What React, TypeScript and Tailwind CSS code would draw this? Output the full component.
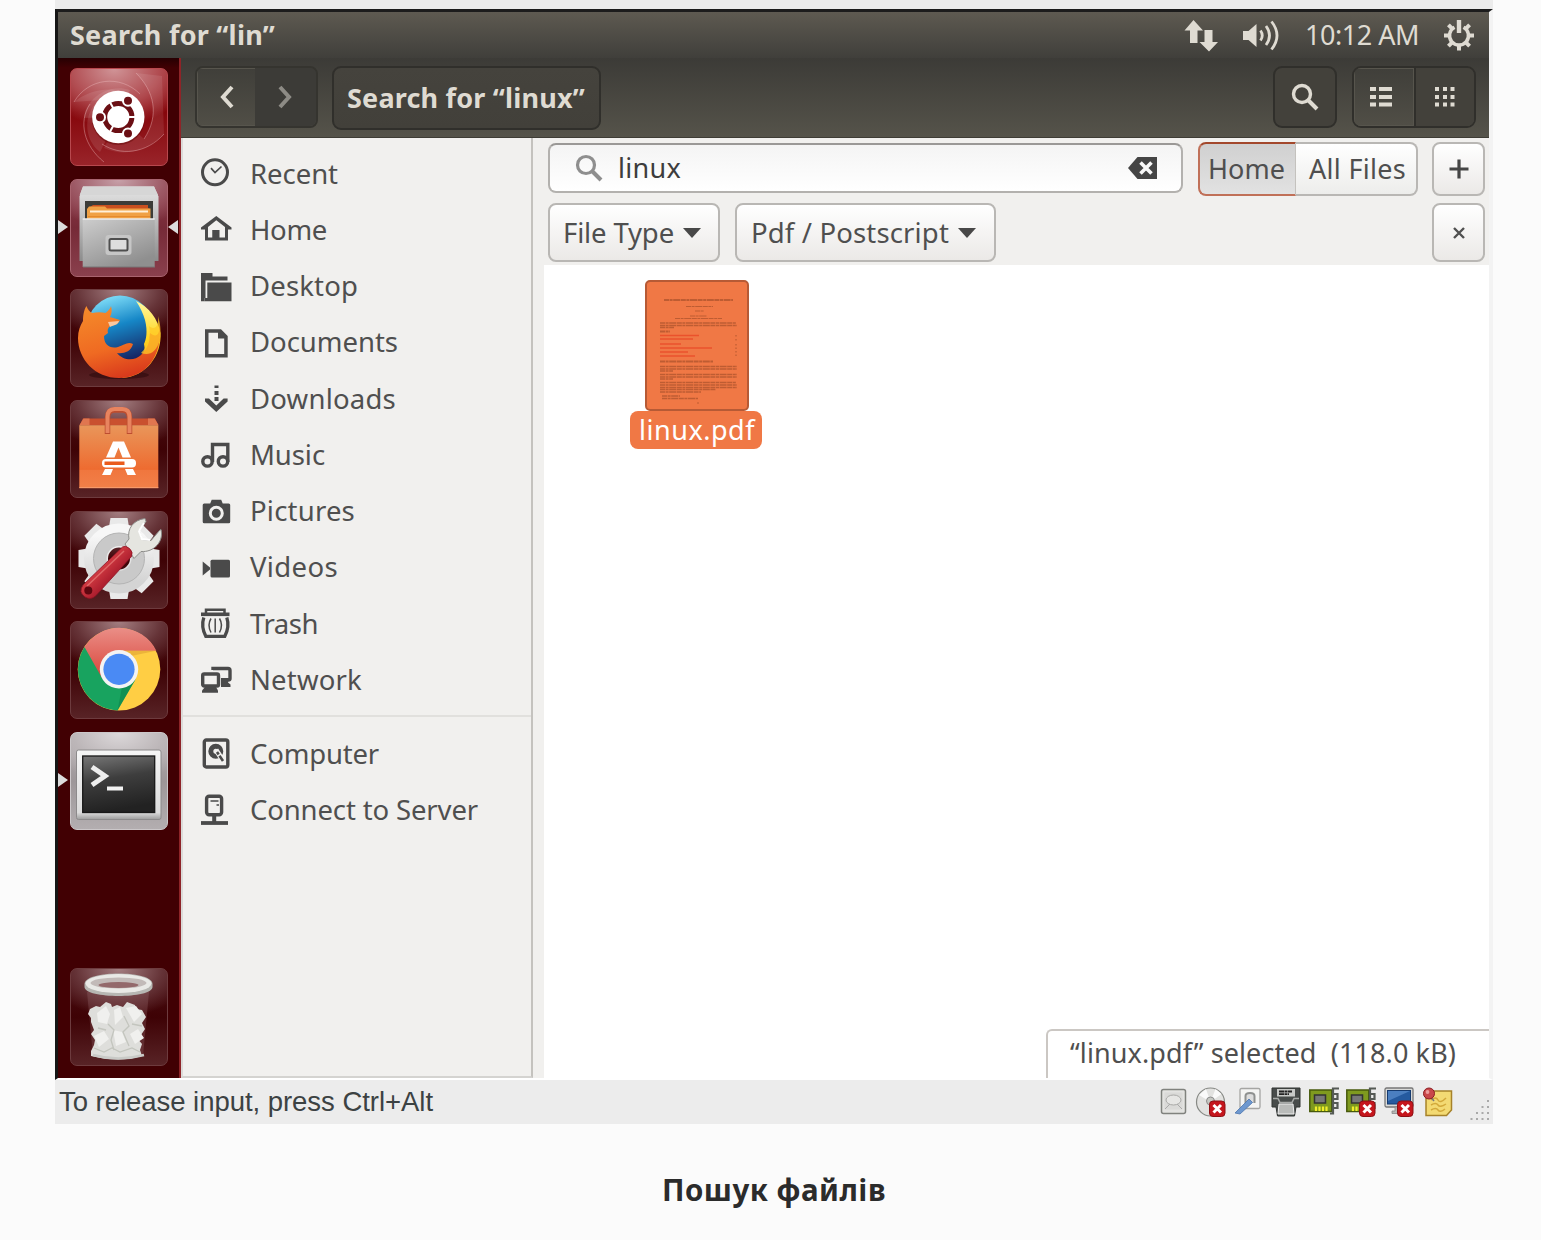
import { useLayoutEffect, useRef, type ReactNode } from 'react';

/* Text whose tracking is tuned so that it spans a given width. */
function Fit({ w, children, className = '' }: { w: number; children: string; className?: string }) {
  const ref = useRef<HTMLSpanElement>(null);
  useLayoutEffect(() => {
    const el = ref.current;
    if (!el) return;
    el.style.letterSpacing = '0px';
    const natural = el.getBoundingClientRect().width;
    el.style.letterSpacing = `${(w - natural) / children.length}px`;
  }, [w, children]);
  return (
    <span ref={ref} className={`inline-block shrink-0 whitespace-pre ${className}`}>
      {children}
    </span>
  );
}

function Tile({ tone = 'glass', left, right, children }: { tone?: string; left?: boolean; right?: boolean; children: ReactNode }) {
  const tones: Record<string, string> = {
    glass: 'bg-[radial-gradient(ellipse_75%_50%_at_50%_0%,#a37d80,#653337_60%,transparent_100%),linear-gradient(#4b1216,#3e0205_50%,#582326)] border-[#6d3b3e]',
    ubuntu: 'bg-[radial-gradient(ellipse_80%_60%_at_45%_0%,#d09497,#b04a4f_60%,transparent_100%),linear-gradient(#9c1c22,#86060b_45%,#99242a)] border-[#b8484e]',
    files: 'bg-[radial-gradient(ellipse_80%_50%_at_50%_0%,#c7a1a9,#9d5965_60%,transparent_100%),linear-gradient(#8f3c4a,#762a37_50%,#8a404d)] border-[#a9646f]',
    grey: 'bg-[radial-gradient(ellipse_80%_50%_at_50%_0%,#dcd8da,#bcb6b8_60%,transparent_100%),linear-gradient(#b5afb1,#9d9799_50%,#b3aeb0)] border-[#cbc7c9]',
  };
  return (
    <div className="relative flex h-[98px] shrink-0 justify-center">
      <div className={`h-[98px] w-[98px] rounded-[7px] border ${tones[tone]}`}>
        <svg viewBox="1 1 96 96" className="h-full w-full overflow-visible">{children}</svg>
      </div>
      {left && <div className="absolute left-0 top-[41px] h-0 w-0 border-y-[7px] border-l-[10px] border-y-transparent border-l-[#dcdcdc]" />}
      {right && <div className="absolute right-px top-[41px] h-0 w-0 border-y-[7px] border-r-[10px] border-y-transparent border-r-[#dcdcdc]" />}
    </div>
  );
}

const teeth = [0, 45, 90, 135, 180, 225, 270, 315];

function Launcher() {
  return (
    <aside className="flex w-[123px] shrink-0 flex-col gap-[12.7px] border-r-2 border-[#8e2428] bg-[#410003] bg-[linear-gradient(#260002,#410003_10px)] pt-[10px]">
      <Tile tone="ubuntu">
        <path d="M4 34C18 22 46 15 66 30L48 49 30 84C12 70 14 42 30 32Z" fill="#fff" fillOpacity=".1" />
        <path d="M66 5c18 18 24 42 8 66L50 49 34 80C56 90 78 82 94 66L92 8Z" fill="#fff" fillOpacity=".09" />
        <path d="M14 50C14 36 34 14 60 22L48 49Z" fill="#fff" fillOpacity=".1" />
        <path d="M4 34C18 10 50 6 70 26M66 5c18 18 24 42 8 66M94 66C76 86 50 88 32 76M34 94C14 78 8 54 20 36" fill="none" stroke="#f0c0c2" strokeOpacity=".4" strokeWidth="1" />
        <circle cx="48.3" cy="50.5" r="26.5" fill="#500" opacity=".4" />
        <circle cx="48.3" cy="49" r="26.2" fill="#fff" />
        <circle cx="48.3" cy="49" r="13.6" fill="none" stroke="#6b0f14" strokeWidth="5" />
        <g stroke="#fff" strokeWidth="2">
          <path d="M57 49h10M44 41.500l-5-9M44 56.500l-5 9" />
          <circle cx="30" cy="49.2" r="5" fill="#6b0f14" />
          <circle cx="58" cy="32.8" r="5" fill="#6b0f14" />
          <circle cx="58" cy="65.4" r="5" fill="#6b0f14" />
        </g>
      </Tile>
      <Tile tone="files" left right>
        <defs>
          <linearGradient id="cab" x1="0" y1="0" x2="0" y2="1"><stop offset="0" stopColor="#e6e6e6" /><stop offset="1" stopColor="#8c8c8c" /></linearGradient>
          <linearGradient id="drw" x1="0" y1="0" x2=".6" y2="1"><stop offset="0" stopColor="#cdcdcd" /><stop offset="1" stopColor="#8f8f8f" /></linearGradient>
        </defs>
        <path d="M13 7.500h71l4.500 10V82h-79V17.500Z" fill="url(#cab)" />
        <path d="M13 7.500h71l4 8.500H9.700Z" fill="#d6d6d6" />
        <path d="M15 22h68v18H15z" fill="#3c3c38" />
        <path d="M20 28l3-2h55v3l2 1v10H20z" fill="#c94f1e" />
        <path d="M17 30l2-2.500h16l2 2h43.500V40H17z" fill="#f0a145" />
        <path d="M20 32.500h58" stroke="#fff0d8" strokeWidth="1.800" />
        <path d="M18 37.500h62" stroke="#e58a2d" strokeWidth="1" />
        <path d="M12.700 40h72v48h-72z" fill="url(#drw)" />
        <path d="M12.700 40h72" stroke="#ededed" strokeWidth="1.500" />
        <path d="M13 88h72" stroke="#777" strokeWidth="1" />
        <rect x="35.500" y="56" width="26" height="20" rx="3" fill="#c6c6c6" />
        <rect x="39.500" y="60" width="18" height="11.500" rx="1.500" fill="#ddd" stroke="#4e4e4e" strokeWidth="2" />
      </Tile>
      <Tile>
        <defs>
          <linearGradient id="globe" x1=".3" y1="0" x2=".6" y2="1"><stop offset="0" stopColor="#83e0fa" /><stop offset=".45" stopColor="#1687c7" /><stop offset="1" stopColor="#16205e" /></linearGradient>
          <linearGradient id="fox" x1=".2" y1="0" x2=".5" y2="1"><stop offset="0" stopColor="#f58a2a" /><stop offset=".6" stopColor="#ef6a22" /><stop offset="1" stopColor="#d93a1c" /></linearGradient>
          <linearGradient id="tail" x1="0" y1="0" x2="0" y2="1"><stop offset="0" stopColor="#fff9a0" /><stop offset=".5" stopColor="#ffd51e" /><stop offset="1" stopColor="#f2901e" /></linearGradient>
        </defs>
        <ellipse cx="49" cy="86" rx="30" ry="4" fill="#1c0002" opacity=".4" />
        <circle cx="50" cy="40" r="33.500" fill="url(#globe)" />
        <path d="M66 12c13 6 22 18 24.500 32C92 66 76 88 52 89c8-13 26-16 22-34 2-4 4-12 1-24-2-7-5-13-9-19Z" fill="url(#tail)" />
        <path d="M13 32c0-8 2-13 3.500-15 1 3 3 6 6 7 4-1 9-1 13 0 3-2 5-5 5.500-7 1 4 1 7-1 11l10 3c-1 4-6 5-10 6-2 2-3 4-2 7l-4 3c0 9 6 13 14 11 6-2 10-6 15-3-2 8-10 10-16 9 6 8 18 8 24 2 7-7 9-14 9-22 6 5 10 2 9.500-8C93 68 75 89 49 89 25 89 8 70 8 49c0-7 2-12 5-17Z" fill="url(#fox)" />
        <path d="M71 64c8-8 10-17 8-27 7 6 10-2 9-10 7 22-1 43-17 37Z" fill="#ffc927" opacity=".75" />
        <path d="M38 33l11-1c-1 4-5 4-9 6Z" fill="#f9c8a0" />
      </Tile>
      <Tile>
        <defs>
          <linearGradient id="bag" x1="0" y1="0" x2="0" y2="1"><stop offset="0" stopColor="#e9965a" /><stop offset=".7" stopColor="#ee6b30" /><stop offset=".71" stopColor="#f0763e" /><stop offset="1" stopColor="#f28049" /></linearGradient>
        </defs>
        <path d="M13 18.500h72l3.500 7h-79Z" fill="#c9502f" />
        <path d="M9.500 25l4-6.500h6V25zM78 25v-6.500h6.500l4 6.500z" fill="#e07650" />
        <path d="M9.300 25.300h79v63h-79z" fill="url(#bag)" />
        <path d="M9.300 87.500h79" stroke="#f79a6b" />
        <path d="M37.500 34V18q0-8 7-8h8q7 0 7 8v16" fill="none" stroke="#bd4d2f" strokeWidth="5.500" />
        <path d="M37.500 33V17q0-8 7-8h8q7 0 7 8v16" fill="none" stroke="#e8845f" strokeWidth="4" />
        <path d="M43 41.500h11l7 16H52.500l-4-10-4 10H36ZM35 69h8l-2.500 6H32zM55 69h8l3 6h-8.500z" fill="#fff" />
        <rect x="32" y="59" width="34" height="8.500" rx="4" fill="#fff" />
        <rect x="34.500" y="61.500" width="20" height="3.500" fill="#ea5b1c" />
      </Tile>
      <Tile>
        <defs>
          <linearGradient id="gear" x1="0" y1="0" x2="0" y2="1"><stop offset="0" stopColor="#f7f7f7" /><stop offset="1" stopColor="#d4d4d4" /></linearGradient>
          <linearGradient id="hand" x1="0" y1="0" x2="1" y2="1"><stop offset=".3" stopColor="#e2474a" /><stop offset=".7" stopColor="#9c1226" /></linearGradient>
        </defs>
        <g fill="#e9e9e9">
          {teeth.map((a) => (
            <path key={a} d="M39 16l1.500-9h17l1.500 9z" transform={`rotate(${a} 49 47.500)`} />
          ))}
        </g>
        <circle cx="49" cy="47.500" r="23" fill="none" stroke="url(#gear)" strokeWidth="24" />
        <circle cx="49" cy="47.500" r="19" fill="none" stroke="#c9c9c9" strokeWidth="13" />
        <circle cx="49" cy="47.500" r="25.500" fill="none" stroke="#b4b4b4" strokeWidth="1" />
        <path d="M55 33l4-5C57 18 63 9 75 7.500l1 3-7 9 3 9 9 1 8.500-10 1.500-1c3 12-7 23-20 22l-7 7Z" fill="#e5e5e0" stroke="#8d8d8a" strokeWidth="1" />
        <path d="M74 12l-5 8 3 8 8 1" fill="none" stroke="#fff" strokeWidth="2" />
        <path d="M52.500 36q3-2 7 1.500t2 8L26 84.500q-5 5-11 1.500-7-5-2-12Z" fill="url(#hand)" stroke="#8e1325" strokeWidth=".8" />
        <path d="M54 40L17 75" stroke="#f08a84" strokeWidth="1.500" opacity=".6" />
        <circle cx="18.300" cy="79.500" r="4" fill="#5e0710" />
      </Tile>
      <Tile>
        <defs>
          <linearGradient id="cred" x1="0" y1="0" x2="0" y2="1"><stop offset="0" stopColor="#ea8e87" /><stop offset="1" stopColor="#d9453a" /></linearGradient>
        </defs>
        <circle cx="49" cy="48.300" r="41.300" fill="#ffce44" />
        <path d="M14.500 26A41.300 41.300 0 0 0 47.500 89.500L65.500 58.500 49 48Z" fill="#18a35f" />
        <path d="M14.500 26A41.300 41.300 0 0 1 86.300 29.700H49L32 57Z" fill="url(#cred)" />
        <path d="M61 35L86.300 29.700H49Z" fill="#d99a2f" opacity=".5" />
        <path d="M65.500 58.500L57 73 47.500 89.500 52 66Z" fill="#0c7a42" opacity=".45" />
        <circle cx="49" cy="48.300" r="19.200" fill="#f3f3f3" />
        <circle cx="49" cy="48.300" r="15.600" fill="#4a8af4" />
      </Tile>
      <Tile tone="grey" left>
        <defs>
          <linearGradient id="bez" x1="0" y1="0" x2="0" y2="1"><stop offset="0" stopColor="#f6f6f6" /><stop offset=".9" stopColor="#dcdcdc" /><stop offset="1" stopColor="#9c9c9c" /></linearGradient>
          <linearGradient id="scr" x1="0" y1="0" x2=".2" y2="1"><stop offset="0" stopColor="#777" /><stop offset=".45" stopColor="#3e3e3e" /><stop offset="1" stopColor="#222" /></linearGradient>
        </defs>
        <rect x="6.500" y="18" width="84.500" height="69.500" rx="2" fill="url(#bez)" stroke="#8c8a8b" strokeWidth="1" />
        <rect x="12.700" y="24" width="72" height="56.500" fill="url(#scr)" stroke="#181818" strokeWidth="1.300" />
        <path d="M22 35l13 9-13 9" fill="none" stroke="#eee" strokeWidth="5" />
        <path d="M37 56.500h16" stroke="#f2f2f2" strokeWidth="4" />
      </Tile>
      <div className="mt-auto pb-[12px]">
        <Tile>
          <path d="M17 24l6 64q25 5 50 0l6-64Z" fill="#b08a8c" fillOpacity=".22" />
          <path d="M20 41l6-3 4 1 6-5 5 2 1 3 5-2 6 2 4-5 8 3 1 4 6 1 4 7-4 6 3 6-4 6-4 3 5 6-2 6 2 6q-23 7-51 0l0-5 3-6 1-5-4-6 3-4-3-8 0-4-3-4Z" fill="#dededb" />
          <path d="M27 45l9-7 4 8-3 10-9-2zM44 42l6-3 3 10-8 8zM56 40l10-2 6 8-8 8zM24 68l10-5 5 8-10 8zM43 62l9 2 4 10-10 4zM60 66l8-5 6 9-9 6z" fill="#f0f0ee" />
          <path d="M38 56l6 6-3 10 3 10M54 48l5 10-6 6 6 14M28 60l8 2M62 56l10 2M24 80l10 4 8-4 8 4 12-4 8 4" fill="none" stroke="#c3c5be" strokeWidth="1.300" />
          <path d="M23 87q25 7 51 0" fill="none" stroke="#c9cac7" strokeWidth="2.500" />
          <path d="M14.500 16c0-14 68-14 68 0v3c0 12-68 12-68 0Z" fill="#b7b7b3" />
          <ellipse cx="48.500" cy="15.500" rx="33" ry="9.500" fill="#e9e9e6" />
          <ellipse cx="48.500" cy="15" rx="28" ry="5.500" fill="#c2bab8" />
          <ellipse cx="48.500" cy="17" rx="20" ry="3" fill="#93696b" />
        </Tile>
      </div>
    </aside>
  );
}

const D = '#4a4a4a';
const places: { name: string; w: number; icon: ReactNode }[] = [
  { name: 'Recent', w: 88, icon: (<g fill="none" stroke={D}><circle cx="15" cy="15.300" r="12.500" strokeWidth="3" /><path d="M11 11.200l4 4.300 6.500-6" strokeWidth="1.700" /></g>) },
  { name: 'Home', w: 77, icon: (<g fill={D}><path d="M1 14.500L16.300 3 31.500 14.500v2H28V27.500H5V16.500H1ZM8 14v10.500h4.500V17h7v7.500H25V14L16.300 7.200Z" fillRule="evenodd" /><path d="M12.500 17h6v9h-6z" /></g>) },
  { name: 'Desktop', w: 108, icon: (<g fill={D}><path d="M1 3h11.500v3.500h15V10.500H5.500V28h-1v3.300H1Z" /><path d="M7.300 12.500h24.200v18.800H4.500V28h2.800Z" /></g>) },
  { name: 'Documents', w: 148, icon: (<path d="M5 3.300h16L27.700 10v21.500H5ZM8.500 6.800V28h15.700V12.500H18V6.800Z" fill={D} fillRule="evenodd" />) },
  { name: 'Downloads', w: 146, icon: (<g fill={D}><path d="M14.500 3.500h4V6h-4zM14.500 9h4v4h-4zM14.500 15h4v4h-4z" /><path d="M5 16.500h4l7.300 7 7.300-7h4v3L16.300 30 5 19.500Z" /></g>) },
  { name: 'Music', w: 75, icon: (<g fill="none" stroke={D} strokeWidth="3.400"><circle cx="7.500" cy="23.400" r="4.700" /><circle cx="23" cy="23.400" r="4.700" /><path d="M12.500 24V6.500H27.800V24" /></g>) },
  { name: 'Pictures', w: 105, icon: (<g><path d="M2.700 10q0-1.500 1.500-1.500h6l1.500-3.700h9.500l1.500 3.700h6q1.500 0 1.500 1.500v16.700q0 1.500-1.500 1.500h-24.500q-1.500 0-1.500-1.500Z" fill={D} /><circle cx="16.300" cy="18.200" r="6" fill="none" stroke="#f1f0ee" strokeWidth="3" /></g>) },
  { name: 'Videos', w: 88, icon: (<g fill={D}><rect x="10.500" y="8.700" width="19.500" height="17.800" rx="1.500" /><path d="M2.700 10.500L10 16.500v2l-7.300 6Z" /></g>) },
  { name: 'Trash', w: 68, icon: (<g fill="none" stroke={D}><path d="M1 7.300h28.500" strokeWidth="3.600" /><path d="M6 6V2.800h18.500V6" strokeWidth="2.500" /><path d="M3.800 10.500q-3 9 2 18.800h19q5-9.800 2-18.800" strokeWidth="3.300" /><path d="M11 11.500q-4 6.500 0 14M15.200 11.500v14M19.500 11.500q4 6.500 0 14" strokeWidth="1.500" /></g>) },
  { name: 'Network', w: 112, icon: (<g fill="none" stroke={D}><rect x="2.700" y="11" width="15.800" height="12" rx="1.500" strokeWidth="3.400" /><path d="M5 24h11l2 3.500v2.200H2V27.500Z" fill={D} stroke="none" /><path d="M13 7V5.500h15q2 0 2 2v8q0 1.500-2 1.500h-7" strokeWidth="3.400" /><path d="M21 15h8l-1 4.500 2.500 2V24H21Z" fill={D} stroke="none" /></g>) },
];
const devices: typeof places = [
  { name: 'Computer', w: 129, icon: (<g fill="none" stroke={D}><rect x="4.300" y="2" width="23.500" height="27" rx="2" strokeWidth="3.400" /><circle cx="15.800" cy="13.300" r="5" strokeWidth="5" /><path d="M16 12l8 12" stroke="#f1f0ee" strokeWidth="5" /><path d="M17 14l6 9" strokeWidth="2.600" strokeDasharray="3 1.500 8" /></g>) },
  { name: 'Connect to Server', w: 228, icon: (<g fill="none" stroke={D}><rect x="6.600" y="2.300" width="15" height="18.500" rx="2.500" strokeWidth="3.400" /><path d="M10.500 7h8M16.500 11h2.500" strokeWidth="1.500" /><path d="M14.200 21v7" strokeWidth="4" /><path d="M1 29h27" strokeWidth="3.800" /></g>) },
];

function Row({ p }: { p: (typeof places)[number] }) {
  return (
    <li className="flex h-[56.250px] items-center pl-[17px]">
      <svg viewBox="0 0 32 32" className="mr-[18px] h-8 w-8 overflow-visible">{p.icon}</svg>
      <Fit w={p.w} className="text-[27.500px] text-[#4f4f4f]">{p.name}</Fit>
    </li>
  );
}

const btn = 'flex items-center rounded-[8px] border-2 border-[#b9b7b4] bg-gradient-to-b from-white to-[#ebe9e7] text-[27.500px] text-[#4f4f4f]';

const RedX = () => (
  <g><rect x="13.500" y="14" width="15.500" height="15.500" rx="3.500" fill="#c5161d" stroke="#8d1015" /><path d="M17.500 18l7.500 7.500M25 18l-7.500 7.500" stroke="#fff" strokeWidth="3" /></g>
);
const Card = () => (
  <g><path d="M.800 3h22v21.500h-22z" fill="#7f9a1f" stroke="#47590c" strokeWidth="1.500" /><rect x="5.500" y="8" width="11" height="8" fill="#777" stroke="#333" strokeWidth="1.500" /><path d="M7 19.500v4.500M10.500 19.500v4.500M14 19.500v4.500M17.500 19.500v4.500" stroke="#f1ee2b" strokeWidth="2.200" /><path d="M30 1.500h-6v25H21M25 7h3.500v5H25M25 16h3.500v5H25" fill="none" stroke="#555a55" strokeWidth="2.200" /></g>
);
const Status = ({ children }: { children: ReactNode }) => <svg viewBox="0 0 30 30" className="h-[30px] w-[30px] overflow-visible">{children}</svg>;

export default function App() {
  return (
    <div className="h-[1240px] w-[1541px] overflow-hidden bg-[#fbfbfb] pl-[55px] font-['Noto_Sans',sans-serif]">
      <div className="flex h-[1124px] w-[1438px] flex-col bg-[#ececec] pt-[9px]">
        <div className="flex h-[1071px] flex-col border-b-2 border-l-[3px] border-r-[4px] border-t-[3px] border-b-white border-l-[#161616] border-r-[#f3f3f3] border-t-[#1c1c1c]">
          <header className="flex h-[46px] shrink-0 items-center bg-gradient-to-b from-[#5e5a51] to-[#403f3b] pl-[12px] text-[27px] text-[#dfdbd2]">
            <Fit w={205} className="font-bold">Search for “lin”</Fit>
            <svg viewBox="0 0 34 34" className="ml-auto mr-[25px] h-[34px] w-[34px]" fill="#dfdbd2"><path d="M9.500 2L19 12.500H13.500V25H6V12.500H.500ZM20.500 12h8v12h5.500L25 33.500 15.500 24h5Z" /></svg>
            <svg viewBox="0 0 38 34" className="mr-[24px] h-[34px] w-[38px]" fill="none" stroke="#dfdbd2" strokeWidth="2.800"><path d="M0 13h5.500L13.500 6v23L5.500 22H0z" fill="#dfdbd2" stroke="none" /><path d="M17.500 12.500q3.500 5 0 10M23 8q7 9.500 0 19M28.500 3.500q11 14 0 28" /></svg>
            <Fit w={114} className="mr-[25px]">10:12 AM</Fit>
            <svg viewBox="0 0 30 30" className="mr-[15px] h-[30px] w-[30px] overflow-visible" fill="none" stroke="#dfdbd2"><path d="M10.500 7.200a9.500 9.500 0 1 0 9 0" strokeWidth="3.500" /><path d="M15 0v13" strokeWidth="4.400" /><g strokeWidth="4">{[45, 90, 135, 180, 225, 270, 315].map((a) => (<path key={a} d="M15 .500v5" transform={`rotate(${a} 15 15.500)`} />))}</g></svg>
          </header>
          <div className="flex min-h-0 flex-1">
            <Launcher />
            <div className="flex min-w-0 flex-1 flex-col">
              <div className="flex h-[80px] shrink-0 items-start border-b border-[#3e3c35] bg-gradient-to-b from-[#3c3b37] to-[#55534a] pl-[14px] pr-[13px] pt-[8px]">
                <div className="flex h-[62px] w-[123px] overflow-hidden rounded-[8px] border-2 border-[#35342f]">
                  <div className="flex w-[58px] items-center justify-center border border-r-0 border-[#57554d] bg-gradient-to-b from-[#403f3a] to-[#504e46]">
                    <svg viewBox="0 0 14 24" className="h-6 w-3.5"><path d="M12 2L3 12l9 10" fill="none" stroke="#dfdbd2" strokeWidth="4" /></svg>
                  </div>
                  <div className="flex flex-1 items-center justify-center bg-[#3c3b37]">
                    <svg viewBox="0 0 14 24" className="mr-px h-6 w-3.5"><path d="M2 2l9 10-9 10" fill="none" stroke="#8d8b85" strokeWidth="4" /></svg>
                  </div>
                </div>
                <div className="ml-[14px] flex h-[64px] w-[269px] items-center rounded-[9px] border-2 border-[#302f2b] bg-gradient-to-b from-[#45433d] to-[#42403a] pl-[13px] text-[27px] font-bold text-[#dfdbd2]">
                  <Fit w={238}>Search for “linux”</Fit>
                </div>
                <div className="ml-auto mr-[15px] flex h-[62px] w-[64px] items-center justify-center rounded-[9px] border-2 border-[#302f2b] bg-[#43413b]">
                  <svg viewBox="0 0 28 28" className="h-7 w-7" fill="none" stroke="#dfdbd2"><circle cx="11" cy="11" r="8.500" strokeWidth="3.400" /><path d="M17 17l9 9" strokeWidth="4" /></svg>
                </div>
                <div className="flex h-[62px] w-[124px] overflow-hidden rounded-[9px] border-2 border-[#302f2b]">
                  <div className="flex flex-1 items-center justify-center border border-[#57554d] bg-gradient-to-b from-[#403f3a] to-[#504e46]">
                    <svg viewBox="0 0 22 20" className="mr-1.5 h-5 w-[22px]" fill="#dfdbd2"><path d="M0 0h6v4H0zM9 0h13v4H9zM0 8h6v4H0zM9 8h13v4H9zM0 15.500h6v4H0zM9 15.500h13v4H9z" /></svg>
                  </div>
                  <div className="flex flex-1 items-center justify-center border-l-2 border-[#302f2b] bg-[#43413b]">
                    <svg viewBox="0 0 20 20" className="h-5 w-5" fill="#dfdbd2"><path d="M0 0h4v4H0zM8 0h4v4H8zM15.500 0h4v4h-4zM0 8h4v4H0zM8 8h4v4H8zM15.500 8h4v4h-4zM0 15.500h4v4H0zM8 15.500h4v4H8zM15.500 15.500h4v4h-4z" /></svg>
                  </div>
                </div>
              </div>
              <div className="flex min-h-0 flex-1">
                <nav className="w-[352px] shrink-0 border-b-2 border-l-2 border-r-2 border-b-[#d4d3d0] border-l-[#dcdbd9] border-r-[#c4c2be] bg-[#f1f0ee] pt-[7px]">
                  <ul>{places.map((p) => (<Row key={p.name} p={p} />))}</ul>
                  <hr className="mb-[9px] mt-[7px] border-t-2 border-[#e1e0dd]" />
                  <ul>{devices.map((p) => (<Row key={p.name} p={p} />))}</ul>
                </nav>
                <main className="flex min-w-0 flex-1 flex-col bg-[#f1f0ee]">
                  <div className="flex h-[62px] shrink-0 items-start pl-[15px] pr-[4px] pt-[4px]">
                    <div className="mt-px flex h-[50px] w-[635px] items-center rounded-[8px] border-2 border-[#b3b1ae] border-t-[#9a9896] bg-gradient-to-b from-[#f4f4f4] to-white pl-[25px] pr-[23px]">
                      <svg viewBox="0 0 28 28" className="mr-[15px] h-7 w-7" fill="none" stroke="#8e8e8e"><circle cx="11" cy="11" r="8.500" strokeWidth="3.200" /><path d="M17 17l9 9" strokeWidth="4" /></svg>
                      <Fit w={63} className="text-[27px] text-[#3d3d3d]">linux</Fit>
                      <svg viewBox="0 0 30 22" className="ml-auto h-[22px] w-[30px]"><path d="M0 11L9.500 0H29v22H9.500Z" fill="#454545" /><path d="M12.500 5.500l11 11M23.500 5.500l-11 11" stroke="#f8f8f8" strokeWidth="3.600" /></svg>
                    </div>
                    <div className="ml-[15px] flex h-[54px] w-[220px] text-[27px] text-[#4f4f4f]">
                      <div className="flex w-[98px] items-center rounded-l-[8px] border-2 border-r border-[#c07058] border-r-[#c4c2be] border-t-[#a3482c] bg-gradient-to-b from-[#d0d0d0] to-[#e2e2e2] pl-[8px]"><Fit w={77}>Home</Fit></div>
                      <div className="flex flex-1 items-center rounded-r-[8px] border-2 border-l-0 border-[#b9b7b4] bg-gradient-to-b from-white to-[#ededeb] pl-[13px]"><Fit w={97}>All Files</Fit></div>
                    </div>
                    <div className={`${btn} ml-auto h-[54px] w-[53px] justify-center`}><svg viewBox="0 0 20 20" className="h-5 w-5"><path d="M10 .500v19M.500 10h19" stroke="#454545" strokeWidth="3.200" /></svg></div>
                  </div>
                  <div className="flex h-[65px] shrink-0 items-start pl-[15px] pr-[4px] pt-[3px]">
                    <div className={`${btn} h-[59px] w-[172px] pl-[13px]`}><Fit w={111}>File Type</Fit><svg viewBox="0 0 18 10" className="ml-[9px] h-2.5 w-[18px]"><path d="M0 0h18L9 10z" fill="#484848" /></svg></div>
                    <div className={`${btn} ml-[15px] h-[59px] w-[261px] pl-[14px]`}><Fit w={198}>Pdf / Postscript</Fit><svg viewBox="0 0 18 10" className="ml-[9px] h-2.5 w-[18px]"><path d="M0 0h18L9 10z" fill="#484848" /></svg></div>
                    <div className={`${btn} ml-auto h-[59px] w-[53px] justify-center`}><svg viewBox="0 0 12 12" className="h-3 w-3"><path d="M1 1l10 10M11 1L1 11" stroke="#505050" strokeWidth="2.400" /></svg></div>
                  </div>
                  <div className="ml-[11px] flex flex-1 flex-col justify-between bg-white">
                    <div className="ml-[86px] mt-[15px] flex w-[132px] flex-col items-center">
                      <div className="ml-[2px] h-[131px] w-[104px] rounded-[5px] border-2 border-[#b65a35] bg-[#f07845]">
                        <svg viewBox="2 2 100 127" className="h-full w-full" fill="none" stroke="#8c3f20">
                          <g strokeOpacity=".5" strokeDasharray="5 .6 3 .6 7 .6">
                            <path d="M19 20h69" strokeWidth="2.200" /><path d="M41 26.500h27M50 31h9M45 36h17M30 38.500h47" strokeWidth="1.200" />
                            <path d="M15 43h76M15 45.500h77M15 47.500h14" strokeWidth="1.300" /><path d="M15 51.500h10" strokeWidth="2" /><path d="M15 81.500h53" strokeWidth="2" />
                            <path d="M15 86.500h77M15 89h77M15 91h13M15 94.500h77M15 97h77M15 99h13M15 102.500h76M15 105h77M15 107.500h77M15 109.500h56M15 112h41M17 116h18M17 118.500h36" strokeWidth="1.600" />
                          </g>
                          <g stroke="#e8391c" strokeOpacity=".6" strokeWidth="1.300"><path d="M15 55.500h39M15 59h33M15 64h21M15 68h52M15 72h28M15 76h35" /></g>
                          <path d="M91 55v3M91 59v3M91 64v6M91 71v6" strokeOpacity=".6" strokeDasharray="1.500 2" />
                          <path d="M52 123h2" strokeOpacity=".5" />
                        </svg>
                      </div>
                      <div className="flex h-[38px] w-[132px] items-center justify-center rounded-[8px] bg-[#f07845] pl-[2px] text-[27px] text-white"><Fit w={116}>linux.pdf</Fit></div>
                    </div>
                    <div className="flex h-[49px] w-[443px] items-center self-end rounded-tl-[6px] border-l-2 border-t-2 border-[#cbc7c3] pb-[3px] pl-[22px] text-[27px] text-[#4f4f4f]"><Fit w={386}>“linux.pdf” selected  (118.0 kB)</Fit></div>
                  </div>
                </main>
              </div>
            </div>
          </div>
        </div>
        <footer className="flex flex-1 items-center pl-[4px] font-['Liberation_Sans',sans-serif] text-[27.500px] text-[#3c4243]">
          <Fit w={374}>To release input, press Ctrl+Alt</Fit>
          <div className="ml-auto mr-[19px] flex gap-[7.500px]">
            <Status><rect x="2.500" y="2.500" width="24" height="24" rx="2" fill="#e3e3e1" stroke="#80827e" strokeWidth="1.500" /><rect x="5.500" y="5.500" width="18" height="17" fill="#dadad8" /><ellipse cx="14.500" cy="13" rx="7.500" ry="5" fill="#e6e6e4" stroke="#a9a9a7" /><path d="M6 22l5-5M23 22l-5-5" stroke="#aaa" /></Status>
            <Status><circle cx="14.500" cy="15" r="14" fill="#e2e2e0" stroke="#878985" strokeWidth="1.200" /><path d="M14.500 15L3 8l7-6zM14.500 15l11-8-6-5z" fill="#fafafa" /><circle cx="14.500" cy="14" r="4" fill="#c6c8c3" stroke="#8b8b8b" /><RedX /></Status>
            <Status><rect x="6" y="1.500" width="20" height="20" rx="1.500" fill="#f4f4f3" stroke="#a5a5a3" strokeWidth="1.300" /><path d="M11.500 16V9q0-3 4.500-3t4.500 3v7" fill="#ddd" stroke="#8f9190" strokeWidth="2" /><path d="M1 26L15 12l3.500 3.500L6 27z" fill="#6e98cf" stroke="#4a74ad" strokeWidth=".8" /></Status>
            <Status><path d="M1 1h28v19h-4l-1.500 9h-17L5 20H1z" fill="#484c4b" stroke="#303433" /><rect x="6" y="2" width="18" height="7.500" fill="#c8cac8" /><path d="M8 4.500h13M8 7.200h10" stroke="#222" strokeWidth="1.800" strokeDasharray="5 .5 3 .5" /><path d="M2 11.500h5l2 4h12l2-4h5" fill="none" stroke="#a8aba9" strokeWidth="1.500" /><path d="M8 17h14l1 10H7z" fill="#b9bbb9" stroke="#eee" /></Status>
            <Status><Card /></Status>
            <Status><Card /><RedX /></Status>
            <Status><rect x="1" y="1" width="28" height="19" rx="1.500" fill="#d9dad8" stroke="#777" strokeWidth="1.300" /><rect x="3.500" y="3.500" width="23" height="13.500" fill="#255a9f" stroke="#153b70" /><path d="M4 4h22L4 14z" fill="#4b7fc0" /><path d="M11 20h7v4h4v2.500H8V24h3z" fill="#b5b7b5" stroke="#888" strokeWidth=".8" /><RedX /></Status>
            <Status><path d="M5 4h25.500v19l-5 5.500H5z" fill="#f3da73" stroke="#a6822a" strokeWidth="1.500" /><path d="M10 13q5-4 7 0t8-2M10 18q5-3 7 0t8-1M10 23q5-3 7 0t7-1" fill="none" stroke="#d3a93a" strokeWidth="1.500" /><path d="M8 8l5 6" stroke="#777" strokeWidth="1.500" /><circle cx="8" cy="6.500" r="5.500" fill="#c9474a" stroke="#8c1d22" /><circle cx="6.500" cy="5" r="1.900" fill="#eb9c9c" /></Status>
          </div>
          <svg viewBox="0 0 20 22" className="mr-[3px] mt-[18px] h-[22px] w-5" fill="#a9a9a9"><path d="M17 0h2v2h-2zM17 6h2v2h-2zM11.500 6h2v2h-2zM17 12h2v2h-2zM11.500 12h2v2h-2zM6 12h2v2H6zM17 18h2v2h-2zM11.500 18h2v2h-2zM6 18h2v2H6zM.500 18h2v2h-2z" /></svg>
        </footer>
      </div>
      <div className="flex h-[116px] w-[1438px] items-center justify-center pt-[17px] text-[29.500px] font-bold text-[#2b2b2b]"><Fit w={224}>Пошук файлів</Fit></div>
    </div>
  );
}
